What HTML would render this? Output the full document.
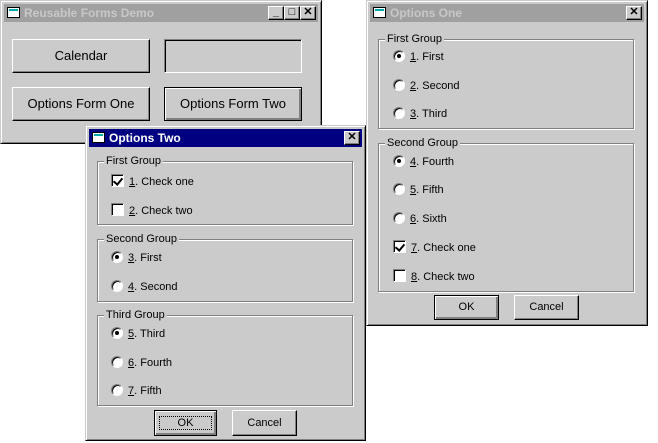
<!DOCTYPE html>
<html><head><style>
*{box-sizing:border-box;margin:0;padding:0}
body{width:658px;height:443px;background:#fff;position:relative;overflow:hidden;font-family:"Liberation Sans",sans-serif;font-size:11px;color:#000}
.win{position:absolute;background:#cbcbcb;border:1px solid;border-color:#cbcbcb #000 #000 #cbcbcb;box-shadow:inset 1px 1px 0 #fff,inset -1px -1px 0 #808080}
.tb{position:absolute;left:3px;right:3px;top:3px;height:18px;background:#a0a0a0;color:#c8c8c8;font-weight:bold;font-size:12px;line-height:18px;padding-left:20px}
.tb.act{background:#000080;color:#fff}
.ico{position:absolute;left:3px;top:3px;width:13px;height:11px;border:1px solid #000;background:#fff}
.ico:before{content:"";position:absolute;left:1px;top:1px;width:9px;height:2px;background:#0aa}
.cb{position:absolute;top:2px;width:16px;height:14px;background:#cbcbcb;border:1px solid;border-color:#fff #000 #000 #fff;box-shadow:inset -1px -1px 0 #808080;color:#000;font-size:11px;line-height:11px;text-align:center;font-weight:bold}
.btn{position:absolute;background:#cbcbcb;border:1px solid;border-color:#fff #000 #000 #fff;box-shadow:inset -1px -1px 0 #808080;text-align:center}
.btn.def{border:1px solid #000;box-shadow:inset 1px 1px 0 #fff,inset -2px -2px 0 #808080}
.grp{position:absolute;border:1px solid #808080;box-shadow:1px 1px 0 #fff,inset 1px 1px 0 #fff}
.grp .lb{position:absolute;left:6px;top:-8px;background:#cbcbcb;padding:0 2px;line-height:14px}
.it{position:absolute;line-height:14px;white-space:nowrap}
.r{display:inline-block;width:12px;height:12px;border-radius:50%;background:#fff;border:1px solid;border-color:#808080 #fff #fff #808080;box-shadow:inset 1px 1px 0 #000;vertical-align:-2px;margin-right:5px;position:relative}
.r.on:after{content:"";position:absolute;left:3px;top:3px;width:4px;height:4px;border-radius:50%;background:#000}
.c{display:inline-block;width:13px;height:13px;background:#fff;border:1px solid;border-color:#808080 #fff #fff #808080;box-shadow:inset 1px 1px 0 #000;vertical-align:-2px;margin-right:5px;position:relative}
.c.on:after{content:"";position:absolute;left:3px;top:1px;width:4px;height:7px;border:solid #000;border-width:0 2px 2px 0;transform:rotate(40deg)}
u{text-decoration:underline}
</style></head><body>

<div class="win" style="left:0;top:0;width:322px;height:144px">
 <div class="tb"><span class="ico"></span>Reusable Forms Demo
  <span class="cb" style="right:34px">_</span><span class="cb" style="right:18px">□</span><span class="cb" style="right:2px">✕</span></div>
 <div class="btn" style="left:11px;top:38px;width:138px;height:34px;line-height:32px;font-size:13px">Calendar</div>
 <div style="position:absolute;left:163px;top:38px;width:138px;height:34px;border:1px solid;border-color:#808080 #fff #fff #808080;box-shadow:inset 1px 1px 0 #000"></div>
 <div class="btn" style="left:11px;top:86px;width:138px;height:34px;line-height:32px;font-size:13px">Options Form One</div>
 <div class="btn def" style="left:163px;top:86px;width:138px;height:34px;line-height:32px;font-size:13px">Options Form Two</div>
</div>

<div class="win" style="left:366px;top:0;width:282px;height:326px">
 <div class="tb"><span class="ico"></span>Options One<span class="cb" style="right:2px">✕</span></div>
 <div class="grp" style="left:11px;top:38px;width:256px;height:90px"><span class="lb">First Group</span></div>
 <div class="it" style="left:26px;top:49px"><span class="r on"></span><u>1</u>. First</div>
 <div class="it" style="left:26px;top:78px"><span class="r"></span><u>2</u>. Second</div>
 <div class="it" style="left:26px;top:106px"><span class="r"></span><u>3</u>. Third</div>
 <div class="grp" style="left:11px;top:142px;width:256px;height:149px"><span class="lb">Second Group</span></div>
 <div class="it" style="left:26px;top:154px"><span class="r on"></span><u>4</u>. Fourth</div>
 <div class="it" style="left:26px;top:182px"><span class="r"></span><u>5</u>. Fifth</div>
 <div class="it" style="left:26px;top:211px"><span class="r"></span><u>6</u>. Sixth</div>
 <div class="it" style="left:26px;top:239px"><span class="c on"></span><u>7</u>. Check one</div>
 <div class="it" style="left:26px;top:268px"><span class="c"></span><u>8</u>. Check two</div>
 <div class="btn def" style="left:67px;top:294px;width:65px;height:25px;line-height:23px">OK</div>
 <div class="btn" style="left:147px;top:294px;width:65px;height:25px;line-height:23px">Cancel</div>
</div>

<div class="win" style="left:85px;top:125px;width:281px;height:316px">
 <div class="tb act"><span class="ico"></span>Options Two<span class="cb" style="right:2px">✕</span></div>
 <div class="grp" style="left:11px;top:35px;width:256px;height:64px"><span class="lb">First Group</span></div>
 <div class="it" style="left:25px;top:48px"><span class="c on"></span><u>1</u>. Check one</div>
 <div class="it" style="left:25px;top:77px"><span class="c"></span><u>2</u>. Check two</div>
 <div class="grp" style="left:11px;top:113px;width:256px;height:63px"><span class="lb">Second Group</span></div>
 <div class="it" style="left:25px;top:125px"><span class="r on"></span><u>3</u>. First</div>
 <div class="it" style="left:25px;top:154px"><span class="r"></span><u>4</u>. Second</div>
 <div class="grp" style="left:11px;top:189px;width:256px;height:91px"><span class="lb">Third Group</span></div>
 <div class="it" style="left:25px;top:201px"><span class="r on"></span><u>5</u>. Third</div>
 <div class="it" style="left:25px;top:230px"><span class="r"></span><u>6</u>. Fourth</div>
 <div class="it" style="left:25px;top:258px"><span class="r"></span><u>7</u>. Fifth</div>
 <div class="btn def" style="left:68px;top:284px;width:63px;height:26px;line-height:24px"><span style="outline:1px dotted #000;padding:0 18px">OK</span></div>
 <div class="btn" style="left:146px;top:284px;width:65px;height:26px;line-height:24px">Cancel</div>
</div>
</body></html>
